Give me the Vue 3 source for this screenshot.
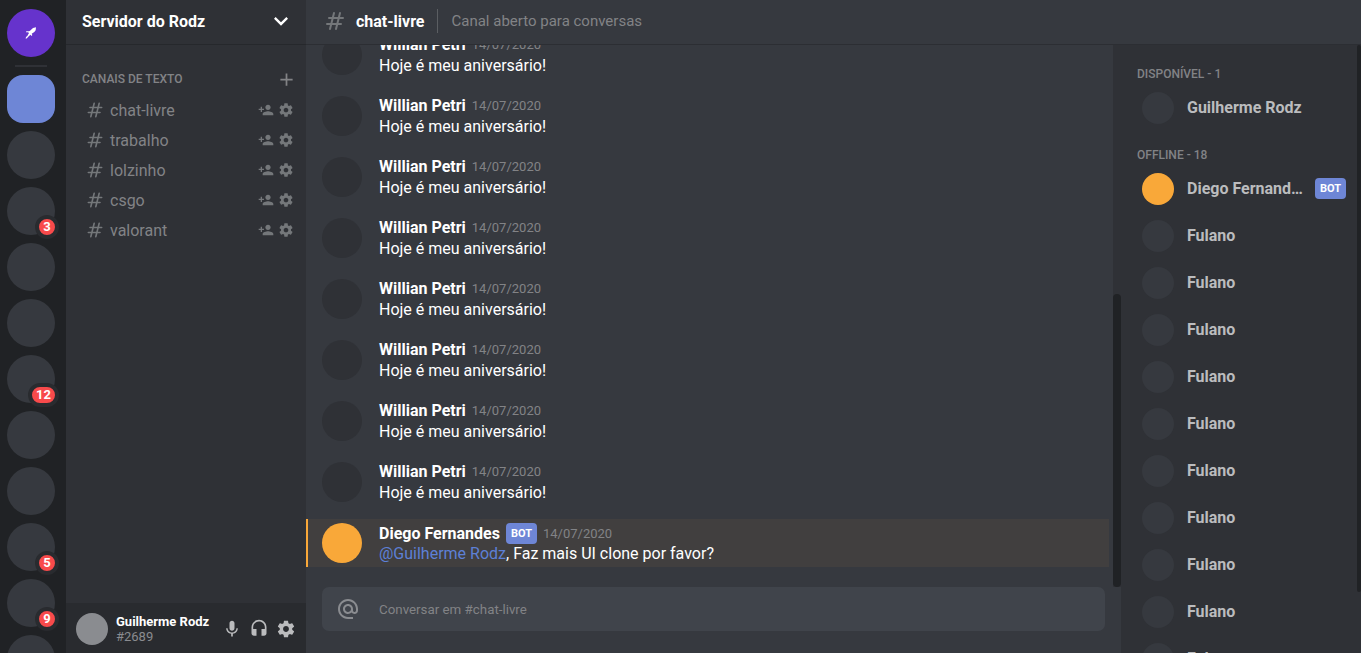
<script setup>
const servers = [
  { name: 'Servidor do Rodz', kind: 'active' },
  { name: 'Servidor 2' },
  { name: 'Servidor 3', mentions: 3 },
  { name: 'Servidor 4' },
  { name: 'Servidor 5' },
  { name: 'Servidor 6', mentions: 12 },
  { name: 'Servidor 7' },
  { name: 'Servidor 8' },
  { name: 'Servidor 9', mentions: 5 },
  { name: 'Servidor 10', mentions: 9 },
  { name: 'Servidor 11' },
]
const channels = ['chat-livre', 'trabalho', 'lolzinho', 'csgo', 'valorant']
const messages = Array.from({ length: 8 }, (_, id) => ({
  id,
  author: 'Willian Petri',
  date: '14/07/2020',
  text: 'Hoje é meu aniversário!',
}))
const offline = Array.from({ length: 17 }, (_, id) => ({ id, name: 'Fulano' }))
</script>

<template>
  <div class="app">
    <nav class="servers" aria-label="Servidores">
      <button class="server home" aria-label="Início">
        <svg class="rocket" viewBox="0 0 36 36" aria-hidden="true">
          <path d="M33 1 L24 3 L15 11 L12 13 L4 13 L3 16 L9 16 L12 18 L9 23 L7 27 L3 30 L2 35 L6 34 L9 30 L13 26 L16 23 L20 27 L22 24 L20 20 L28 15 L32 10 Z" />
        </svg>
      </button>
      <hr class="separator" />
      <button
        v-for="s in servers"
        :key="s.name"
        class="server"
        :class="s.kind"
        :aria-label="s.name"
      >
        <span v-if="s.mentions" class="badge">{{ s.mentions }}</span>
      </button>
    </nav>

    <aside class="sidebar">
      <button class="server-name">
        <span>Servidor do Rodz</span>
        <svg class="i28" viewBox="0 0 24 24"><path d="M16.59 8.59L12 13.17 7.41 8.59 6 10l6 6 6-6z" /></svg>
      </button>
      <div class="channels">
        <div class="category">
          <span>Canais de texto</span>
          <button class="icon" aria-label="Criar canal">
            <svg class="i21" viewBox="0 0 24 24"><path d="M19 11h-6V5h-2v6H5v2h6v6h2v-6h6z" /></svg>
          </button>
        </div>
        <div v-for="c in channels" :key="c" class="channel">
          <a href="#" class="channel-link">
            <svg class="i20 line" viewBox="0 0 24 24"><path d="M7 20l4-16m2 16l4-16M6 9h14M4 15h14" /></svg>
            <span>{{ c }}</span>
          </a>
          <button class="icon" :aria-label="'Convidar para ' + c">
            <svg class="i16" viewBox="0 0 24 24"><path d="M15 12c2.21 0 4-1.79 4-4s-1.79-4-4-4-4 1.79-4 4 1.79 4 4 4zm-9-2V7H4v3H1v2h3v3h2v-3h3v-2H6zm9 4c-2.67 0-8 1.34-8 4v2h16v-2c0-2.66-5.33-4-8-4z" /></svg>
          </button>
          <button class="icon" :aria-label="'Configurar ' + c">
            <svg class="i16" viewBox="0 0 24 24"><path d="M19.43 12.98c.04-.32.07-.64.07-.98s-.03-.66-.07-.98l2.11-1.65c.19-.15.24-.42.12-.64l-2-3.46c-.12-.22-.39-.3-.61-.22l-2.49 1c-.52-.4-1.08-.73-1.69-.98l-.38-2.65C14.46 2.18 14.25 2 14 2h-4c-.25 0-.46.18-.49.42l-.38 2.65c-.61.25-1.17.59-1.69.98l-2.49-1c-.23-.09-.49 0-.61.22l-2 3.46c-.13.22-.07.49.12.64l2.11 1.65c-.04.32-.07.65-.07.98s.03.66.07.98l-2.11 1.65c-.19.15-.24.42-.12.64l2 3.46c.12.22.39.3.61.22l2.49-1c.52.4 1.08.73 1.69.98l.38 2.65c.03.24.24.42.49.42h4c.25 0 .46-.18.49-.42l.38-2.65c.61-.25 1.17-.59 1.69-.98l2.49 1c.23.09.49 0 .61-.22l2-3.46c.12-.22.07-.49-.12-.64l-2.11-1.65zM12 15.5c-1.93 0-3.5-1.57-3.5-3.5s1.57-3.5 3.5-3.5 3.5 1.57 3.5 3.5-1.57 3.5-3.5 3.5z" /></svg>
          </button>
        </div>
      </div>
      <footer class="user">
        <span class="avatar small self"></span>
        <div class="user-text">
          <strong>Guilherme Rodz</strong>
          <span>#2689</span>
        </div>
        <div class="user-tools">
          <button class="icon" aria-label="Microfone">
            <svg class="i20" viewBox="0 0 24 24"><path d="M12 14c1.66 0 2.99-1.34 2.99-3L15 5c0-1.66-1.34-3-3-3S9 3.34 9 5v6c0 1.66 1.34 3 3 3zm5.3-3c0 3-2.54 5.1-5.3 5.1S6.7 14 6.7 11H5c0 3.41 2.72 6.23 6 6.72V21h2v-3.28c3.28-.48 6-3.3 6-6.72h-1.7z" /></svg>
          </button>
          <button class="icon" aria-label="Fones">
            <svg class="i20" viewBox="0 0 24 24"><path d="M12 1c-4.97 0-9 4.03-9 9v7c0 1.66 1.34 3 3 3h3v-8H5v-2c0-3.87 3.13-7 7-7s7 3.13 7 7v2h-4v8h3c1.66 0 3-1.34 3-3v-7c0-4.97-4.03-9-9-9z" /></svg>
          </button>
          <button class="icon" aria-label="Configurações">
            <svg class="i20" viewBox="0 0 24 24"><path d="M19.43 12.98c.04-.32.07-.64.07-.98s-.03-.66-.07-.98l2.11-1.65c.19-.15.24-.42.12-.64l-2-3.46c-.12-.22-.39-.3-.61-.22l-2.49 1c-.52-.4-1.08-.73-1.69-.98l-.38-2.65C14.46 2.18 14.25 2 14 2h-4c-.25 0-.46.18-.49.42l-.38 2.65c-.61.25-1.17.59-1.69.98l-2.49-1c-.23-.09-.49 0-.61.22l-2 3.46c-.13.22-.07.49.12.64l2.11 1.65c-.04.32-.07.65-.07.98s.03.66.07.98l-2.11 1.65c-.19.15-.24.42-.12.64l2 3.46c.12.22.39.3.61.22l2.49-1c.52.4 1.08.73 1.69.98l.38 2.65c.03.24.24.42.49.42h4c.25 0 .46-.18.49-.42l.38-2.65c.61-.25 1.17-.59 1.69-.98l2.49 1c.23.09.49 0 .61-.22l2-3.46c.12-.22.07-.49-.12-.64l-2.11-1.65zM12 15.5c-1.93 0-3.5-1.57-3.5-3.5s1.57-3.5 3.5-3.5 3.5 1.57 3.5 3.5-1.57 3.5-3.5 3.5z" /></svg>
          </button>
        </div>
      </footer>
    </aside>

    <div class="main">
      <header class="channel-info">
        <svg class="i24 line" viewBox="0 0 24 24"><path d="M7 20l4-16m2 16l4-16M6 9h14M4 15h14" /></svg>
        <h1>chat-livre</h1>
        <span class="divider"></span>
        <p>Canal aberto para conversas</p>
      </header>

      <div class="body">
        <main class="chat">
          <div class="scroller">
            <div class="messages">
              <article v-for="m in messages" :key="m.id" class="message">
                <span class="avatar"></span>
                <div class="content">
                  <div class="meta"><strong>{{ m.author }}</strong><time>{{ m.date }}</time></div>
                  <p>{{ m.text }}</p>
                </div>
              </article>
              <article class="message mention">
                <span class="avatar bot"></span>
                <div class="content">
                  <div class="meta"><strong>Diego Fernandes</strong><span class="tag">BOT</span><time>14/07/2020</time></div>
                  <p><a href="#">@Guilherme Rodz</a>, Faz mais UI clone por favor?</p>
                </div>
              </article>
            </div>
            <div class="track"><div class="thumb"></div></div>
          </div>
          <label class="composer">
            <svg class="i24" viewBox="0 0 24 24"><path d="M12 1.95c-5.52 0-10 4.48-10 10s4.48 10 10 10h5v-2h-5c-4.34 0-8-3.66-8-8s3.66-8 8-8 8 3.66 8 8v1.43c0 .79-.71 1.57-1.5 1.57s-1.5-.78-1.5-1.57v-1.43c0-2.76-2.24-5-5-5s-5 2.24-5 5 2.24 5 5 5c1.38 0 2.64-.56 3.54-1.47.65.89 1.77 1.47 2.96 1.47 1.97 0 3.5-1.6 3.5-3.57v-1.43c0-5.52-4.48-10-10-10zm0 13c-1.66 0-3-1.34-3-3s1.34-3 3-3 3 1.34 3 3-1.34 3-3 3z" /></svg>
            <input type="text" placeholder="Conversar em #chat-livre" aria-label="Conversar em #chat-livre" />
          </label>
        </main>

        <aside class="members">
          <div class="member-list">
            <h2>Disponível - 1</h2>
            <div class="member"><span class="avatar small"></span><strong>Guilherme Rodz</strong></div>
            <h2>Offline - 18</h2>
            <div class="member">
              <span class="avatar small bot"></span><strong>Diego Fernandes</strong><span class="tag">BOT</span>
            </div>
            <div v-for="m in offline" :key="m.id" class="member">
              <span class="avatar small"></span><strong>{{ m.name }}</strong>
            </div>
          </div>
          <div class="member-thumb"></div>
        </aside>
      </div>
    </div>
  </div>
</template>

<style>
body {
  background: #36393f;
}
</style>

<style scoped>
* {
  box-sizing: border-box;
  margin: 0;
}
.app {
  display: flex;
  height: 100vh;
  overflow: hidden;
  font-family: Roboto, "Liberation Sans", sans-serif;
  font-size: 16px;
  line-height: 19px;
  color: #fff;
  background: #36393f;
}
button {
  padding: 0;
  border: 0;
  background: none;
  font: inherit;
  color: inherit;
  cursor: pointer;
}
a {
  text-decoration: none;
}
svg {
  display: block;
  flex: none;
  fill: currentColor;
}
.line {
  fill: none;
  stroke: #74777a;
  stroke-width: 2;
  stroke-linecap: round;
  stroke-linejoin: round;
}
.i16 { width: 16px; height: 16px; }
.i20 { width: 20px; height: 20px; }
.i21 { width: 21px; height: 21px; }
.i24 { width: 24px; height: 24px; }
.i28 { width: 28px; height: 28px; }
.icon {
  display: flex;
}

.servers {
  flex: none;
  display: flex;
  flex-direction: column;
  align-items: center;
  gap: 8px;
  width: 66px;
  padding: 9px 11px 0 7px;
  background: #202225;
}
.server {
  position: relative;
  flex: none;
  display: flex;
  align-items: center;
  justify-content: center;
  width: 48px;
  height: 48px;
  border-radius: 50%;
  background: #36393f;
}
.home {
  background: #6633cc;
}
.active {
  border-radius: 16px;
  background: #6e86d6;
}
.rocket {
  width: 12px;
  height: 12px;
}
.separator {
  flex: none;
  width: 32px;
  height: 2px;
  border: 0;
  background: #2f3136;
}
.badge {
  position: absolute;
  right: -4px;
  bottom: -4px;
  min-width: 24px;
  height: 24px;
  padding: 0 4px;
  border: 4px solid #292b2f;
  border-radius: 12px;
  background: #f84a4b;
  font-size: 13px;
  font-weight: 700;
  line-height: 16px;
  text-align: center;
}

.sidebar {
  flex: none;
  display: flex;
  flex-direction: column;
  width: 240px;
  background: #2f3136;
}
.server-name {
  display: flex;
  align-items: center;
  justify-content: space-between;
  height: 45px;
  padding: 0 11px 2px 16px;
  border-bottom: 1px solid #26282c;
  font-weight: 700;
}
.channels {
  flex: 1;
  padding: 24px 12px 0 16px;
  color: #74777a;
}
.category {
  display: flex;
  align-items: center;
  justify-content: space-between;
  height: 21px;
  margin-right: -3px;
  margin-bottom: 5px;
  font-size: 12px;
  font-weight: 500;
  text-transform: uppercase;
  color: #828386;
}
.channel {
  display: flex;
  align-items: center;
  gap: 4px;
  height: 30px;
}
.channel-link {
  flex: 1;
  display: flex;
  align-items: center;
  gap: 5px;
  padding-left: 3px;
  color: #828386;
}
.user {
  display: flex;
  align-items: center;
  height: 50px;
  padding: 2px 10px 0;
  background: #292b2f;
}
.user-text {
  flex: 1;
  display: flex;
  flex-direction: column;
  margin-left: 8px;
  font-size: 13px;
  line-height: 15px;
}
.user-text span {
  color: #8a8c90;
}
.user-tools {
  display: flex;
  gap: 7px;
  color: #bbbcbe;
}

.avatar {
  flex: none;
  width: 40px;
  height: 40px;
  border-radius: 50%;
  background: #2f3136;
}
.small {
  width: 32px;
  height: 32px;
  background: #36393f;
}
.self {
  background: #8a8c90;
}
.bot {
  background: #f9a839;
}
.tag {
  flex: none;
  padding: 4px 5px;
  border-radius: 4px;
  background: #6e86d6;
  font-size: 11px;
  font-weight: 700;
  line-height: 13px;
  color: #fff;
}

.main {
  flex: 1;
  min-width: 0;
  display: flex;
  flex-direction: column;
}
.channel-info {
  flex: none;
  display: flex;
  align-items: center;
  height: 45px;
  padding: 0 17px 2px;
  border-bottom: 1px solid #2c2e33;
}
.channel-info h1 {
  margin-left: 9px;
  font-size: 16px;
  font-weight: 700;
  color: #fff;
}
.channel-info p {
  font-size: 15px;
  color: #828386;
}
.divider {
  width: 1px;
  height: 24px;
  margin: 0 14px 0 12px;
  background: #5b5e62;
}
.body {
  flex: 1;
  min-height: 0;
  display: flex;
}
.chat {
  flex: 1;
  min-width: 0;
  display: flex;
  flex-direction: column;
}
.scroller {
  flex: 1;
  min-height: 0;
  display: flex;
}
.messages {
  flex: 1;
  min-width: 0;
  display: flex;
  flex-direction: column;
  justify-content: flex-end;
  gap: 13px;
  padding: 0 4px 20px 0;
  overflow: hidden;
}
.message {
  flex: none;
  display: flex;
  gap: 17px;
  padding: 4px 16px;
}
.mention {
  padding-left: 14px;
  border-left: 2px solid #f9a839;
  background: #413f3f;
}
.content {
  display: flex;
  flex-direction: column;
  justify-content: space-between;
}
.meta {
  display: flex;
  align-items: center;
  gap: 6px;
}
.meta time {
  font-size: 13px;
  color: #828386;
}
.content a {
  color: #5d80d6;
}
.track {
  flex: none;
  display: flex;
  flex-direction: column;
  justify-content: flex-end;
  width: 8px;
  background: #2f3136;
}
.thumb {
  height: 54%;
  border-radius: 4px;
  background: #202225;
}
.composer {
  flex: none;
  display: flex;
  align-items: center;
  gap: 19px;
  height: 44px;
  margin: 0 16px 22px;
  padding: 0 14px;
  border-radius: 7px;
  background: #40444b;
  color: #8a8c90;
}
.composer input {
  flex: 1;
  min-width: 0;
  padding: 0;
  border: 0;
  outline: 0;
  background: none;
  font-family: inherit;
  color: #fff;
}
.composer input::placeholder {
  color: #828386;
  opacity: 1;
}

.members {
  flex: none;
  display: flex;
  width: 240px;
  background: #2f3136;
}
.member-list {
  flex: 1;
  min-width: 0;
  padding: 22px 6px 0 16px;
  overflow: hidden;
}
.member-list h2 {
  margin-bottom: 3px;
  font-size: 12px;
  font-weight: 500;
  line-height: 14px;
  text-transform: uppercase;
  color: #828386;
}
.member + h2 {
  margin-top: 17px;
}
.member {
  display: flex;
  align-items: center;
  height: 47px;
  padding: 0 5px;
}
.member strong {
  flex: 1;
  min-width: 0;
  margin-left: 13px;
  overflow: hidden;
  text-overflow: ellipsis;
  white-space: nowrap;
  color: #bbbcbe;
}
.member .tag {
  margin-left: 8px;
}
.member-thumb {
  flex: none;
  width: 4px;
  height: 90%;
  border-radius: 4px;
  background: #202225;
}
</style>
